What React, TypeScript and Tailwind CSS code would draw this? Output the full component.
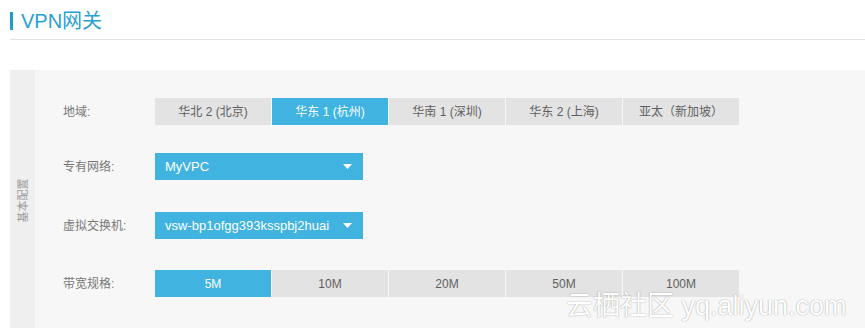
import React from "react";

const regions = ["华北 2 (北京)", "华东 1 (杭州)", "华南 1 (深圳)", "华东 2 (上海)", "亚太（新加坡）"];
const bands = ["5M", "10M", "20M", "50M", "100M"];

function Seg({ items, active }: { items: string[]; active: number }) {
  return (
    <div className="flex gap-[1px]">
      {items.map((t, i) => (
        <div
          key={t}
          className={
            i === active
              ? "w-[116px] h-[27px] flex items-center justify-center text-[12px] bg-[#40b3e0] text-white"
              : "w-[116px] h-[27px] flex items-center justify-center text-[12px] bg-[#e3e3e3] text-[#5f5f5f]"
          }
        >
          {t}
        </div>
      ))}
    </div>
  );
}

function Select({ value }: { value: string }) {
  return (
    <div className="w-[208px] h-[27px] bg-[#40b3e0] text-white text-[13px] flex items-center justify-between pl-[10px] pr-[11px]">
      <span>{value}</span>
      <svg width="9" height="5" viewBox="0 0 9 5">
        <path d="M0 0 L9 0 L4.5 5 Z" fill="#fff" />
      </svg>
    </div>
  );
}

function Row({ label, children, mt }: { label: string; children: React.ReactNode; mt: string }) {
  return (
    <div className={`flex items-center ${mt}`}>
      <div className="w-[92px] text-[12px] text-[#777]">{label}</div>
      {children}
    </div>
  );
}

export default function App() {
  return (
    <div
      className="relative w-[865px] h-[328px] overflow-hidden bg-white"
      style={{ fontFamily: '"Liberation Sans", "Noto Sans CJK SC", sans-serif' }}
    >
      <div className="ml-[10px] h-[40px] border-b border-[#e2e2e2] pt-[11px]">
        <div className="flex items-center">
          <div className="w-[3px] h-[18px] bg-[#1d9bd4]" />
          <div className="ml-[8px] text-[20px] leading-[20px] text-[#2a9fd4]">VPN网关</div>
        </div>
      </div>
      <div className="ml-[10px] mt-[30px] flex h-[300px]">
        <div className="w-[25px] bg-[#efefef] flex justify-center pt-[108px]">
          <div className="h-[44px] w-[12px] flex items-center justify-center">
            <div className="-rotate-90 whitespace-nowrap text-[11px] text-[#999] leading-[11px]">基本配置</div>
          </div>
        </div>
        <div className="flex-1 bg-[#f7f7f7] pl-[28px] pt-[28px]">
          <Row label="地域:" mt="mt-0">
            <Seg items={regions} active={1} />
          </Row>
          <Row label="专有网络:" mt="mt-[28px]">
            <Select value="MyVPC" />
          </Row>
          <Row label="虚拟交换机:" mt="mt-[32px]">
            <Select value="vsw-bp1ofgg393ksspbj2huai" />
          </Row>
          <Row label="带宽规格:" mt="mt-[31px]">
            <Seg items={bands} active={0} />
          </Row>
        </div>
      </div>
      <div className="absolute left-[566px] top-[291px] text-[27px] leading-[30px] text-white whitespace-nowrap [text-shadow:0_0_1px_rgba(0,0,0,0.35),0_0_2px_rgba(0,0,0,0.15)]">
        云栖社区 yq.aliyun.com
      </div>
    </div>
  );
}
